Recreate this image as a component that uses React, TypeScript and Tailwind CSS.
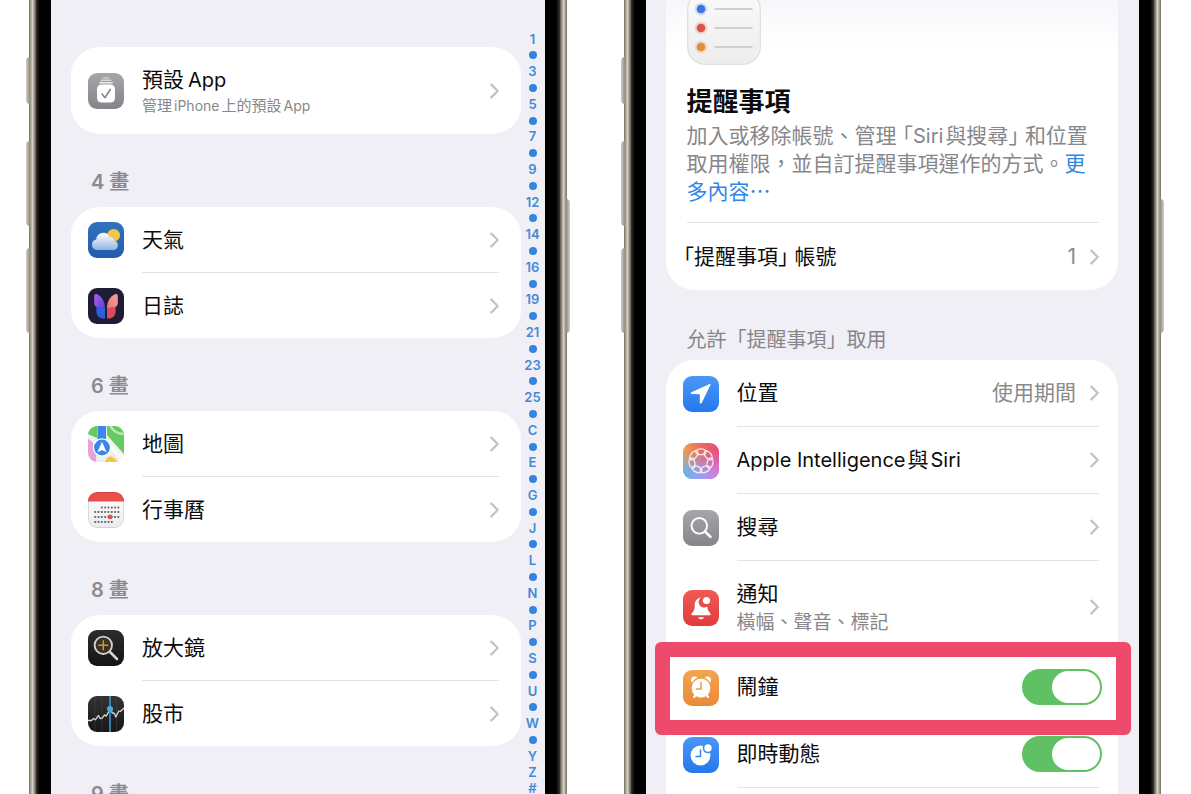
import type { ReactNode } from "react";

const INDEX =
  "1 • 3 • 5 • 7 • 9 • 12 • 14 • 16 • 19 • 21 • 23 • 25 • C • E • G • J • L • N • P • S • U • W • Y Z #".split(" ");

function Chevron() {
  return (
    <svg className="h-4 w-[9px] shrink-0" viewBox="0 0 9 16" fill="none" stroke="#c3c3c6" strokeWidth="2.2" strokeLinecap="round" strokeLinejoin="round" aria-hidden="true">
      <path d="M1.3 1.6 7.7 8l-6.4 6.4" />
    </svg>
  );
}

function Tile({ children }: { children: ReactNode }) {
  return (
    <svg className="size-9 shrink-0 rounded-[9px]" viewBox="0 0 36 36" fill="none" aria-hidden="true">
      {children}
    </svg>
  );
}

function Fill({ id, from, to }: { id: string; from: string; to: string }) {
  return (
    <>
      <defs>
        <linearGradient id={id} x1="0" y1="0" x2="0" y2="1">
          <stop stopColor={from} />
          <stop offset="1" stopColor={to} />
        </linearGradient>
      </defs>
      <rect width="36" height="36" fill={`url(#${id})`} />
    </>
  );
}

const DefaultAppsIcon = () => (
  <Tile>
    <Fill id="defaults" from="#a5a5aa" to="#858589" />
    <path d="M15 5h6" stroke="#c9c9cc" strokeWidth="1.3" strokeLinecap="round" />
    <path d="M13.3 7.3h9.4" stroke="#d8d8da" strokeWidth="1.5" strokeLinecap="round" />
    <path d="M11.8 9.8h12.4" stroke="#ebebec" strokeWidth="1.6" strokeLinecap="round" />
    <rect x="9" y="11.5" width="18" height="18" rx="4.5" fill="#fff" />
    <path d="m14 21 3 3.7 5.2-8.2" stroke="#8c8c90" strokeWidth="1.7" strokeLinecap="round" strokeLinejoin="round" />
  </Tile>
);

const WeatherIcon = () => (
  <Tile>
    <Fill id="weather" from="#3273bd" to="#235bae" />
    <circle cx="25.6" cy="13.3" r="6.4" fill="#f3c54d" />
    <defs>
      <linearGradient id="cloud" x1="0" y1="0" x2="0" y2="1">
        <stop stopColor="#fff" />
        <stop offset="1" stopColor="#8fb4e2" />
      </linearGradient>
    </defs>
    <path d="M8.500 28a5.400 5.400 0 0 1-.3-10.600 7 7 0 0 1 13.300-2.600 5 5 0 0 1 4.800 4 4.700 4.700 0 0 1-.4 9.200z" fill="url(#cloud)" />
  </Tile>
);

const JournalIcon = () => (
  <Tile>
    <rect width="36" height="36" fill="#1f1c36" />
    <defs>
      <linearGradient id="wingL" x1="0" y1="0" x2="1" y2="1">
        <stop stopColor="#b45fe8" />
        <stop offset="1" stopColor="#5440dc" />
      </linearGradient>
      <linearGradient id="wingR" x1="1" y1="0" x2="0" y2="1">
        <stop stopColor="#f3a48f" />
        <stop offset="1" stopColor="#ef6f86" />
      </linearGradient>
    </defs>
    <path d="M8.800 18h6.500l1.700 3v9l-1 .8c-3.700-.6-6.600-2-7.400-5.600-.5-2.700-.4-5.200.2-7.200z" fill="#2f5edb" />
    <path d="M27.200 18h-6.500L19 21v9l1 .8c3.700-.6 6.600-2 7.400-5.600.5-2.700.4-5.200-.2-7.200z" fill="#d94a5c" />
    <path d="M6.200 8.200c0-1.800 1.200-2.700 2.800-2 4.800 2.200 8 6.800 8 14.800-1.500-1.600-4-1.700-6.500-1.700-2.600 0-4-1.200-4.300-3.500z" fill="url(#wingL)" />
    <path d="M29.800 8.200c0-1.800-1.200-2.700-2.800-2-4.800 2.200-8 6.800-8 14.800 1.500-1.600 4-1.700 6.500-1.700 2.600 0 4-1.200 4.300-3.500z" fill="url(#wingR)" />
  </Tile>
);

const MapsIcon = () => (
  <Tile>
    <rect width="36" height="36" fill="#eef0ee" />
    <path d="M0 0h9v12L0 8z" fill="#66ca62" />
    <path d="M19 0h17v28L19 9z" fill="#66ca62" />
    <path d="M22 -1c3 7 9 9 15 9" stroke="#b8e7b0" strokeWidth="2.5" />
    <path d="M0 13c7 3 9 10 8 23H0z" fill="#e5a3da" />
    <path d="M17 36c1-4 4-6 7-5.500l7 5.500z" fill="#f7c83f" />
    <path d="M20 18 36 34" stroke="#fafafa" strokeWidth="4" />
    <rect x="9.5" width="8.5" height="16" fill="#3c86ea" />
    <circle cx="14" cy="21.5" r="9.3" fill="#fff" />
    <circle cx="14" cy="21.5" r="7.9" fill="#3a86e8" />
    <path d="m14 15.700 4.600 10.600L14 24l-4.600 2.300z" fill="#fff" />
  </Tile>
);

const CALENDAR_DOTS = [
  [15.5, [3, 4, 5, 6, 7, 8]],
  [20, [1, 2, 3, 4, 5, 6, 7, 8]],
  [25, [1, 2, 3, 4, 5, 6, 7, 8]],
  [30, [1, 2, 3, 4, 5, 6]],
] as const;

const CalendarIcon = () => (
  <Tile>
    <Fill id="calendar" from="#fdfdfd" to="#ececee" />
    <rect width="36" height="9.5" fill="#ea4e49" />
    {CALENDAR_DOTS.map(([y, columns]) =>
      columns.map((n) => <rect key={`${y}-${n}`} x={3 + n * 3.3} y={y - 1} width="1.9" height="1.9" rx=".4" fill="#6d6d70" />),
    )}
    <rect x="20" y="22.8" width="4.3" height="4.3" rx="1" fill="#e2514c" />
    <rect x=".5" y=".5" width="35" height="35" rx="8.5" stroke="#000" strokeOpacity=".1" />
  </Tile>
);

const MagnifierIcon = () => (
  <Tile>
    <Fill id="magnifier" from="#2d2c2b" to="#141414" />
    <path d="m21.500 21.500 7.500 7.500" stroke="#d4d4d4" strokeWidth="2.6" strokeLinecap="round" />
    <circle cx="15.3" cy="15.3" r="8.7" fill="#3a3222" stroke="#cfcfd0" strokeWidth="1.9" />
    <path d="M15.300 10.800v9M10.800 15.300h9" stroke="#cf9a30" strokeWidth="1.5" strokeLinecap="round" />
  </Tile>
);

const StocksIcon = () => (
  <Tile>
    <Fill id="stocks" from="#343434" to="#161616" />
    <path d="M7 0v36M14 0v36M28.500 0v36" stroke="#444" strokeWidth=".5" />
    <path d="M22 0v36" stroke="#3f9fd8" strokeWidth="1.5" />
    <path d="M0 24.500h3.500l2-2 2 1.200 3-4.200 1.800 3.200 2.200-.8 2-3 1.700 1.200L22 13.500l2.500 3.500 2 .5 1.300 3.500 3-6 1.500.5L36 12" stroke="#d6d6d6" strokeWidth="1.3" strokeLinejoin="round" />
    <circle cx="22" cy="13" r="3.1" fill="#46a9e2" />
  </Tile>
);

const LocationIcon = () => (
  <Tile>
    <Fill id="location" from="#4c97f8" to="#2578ef" />
    <path d="M26.600 8 8.300 16.300c-1 .5-.7 1.800.3 1.800l8.200.1v8.300c0 1.100 1.400 1.400 1.900.4L27.400 9c.3-.8-.1-1.300-.8-1z" fill="#fff" />
  </Tile>
);

const IntelligenceIcon = () => (
  <Tile>
    <defs>
      <linearGradient id="aiTop" x1="0" y1="0" x2="1" y2="0">
        <stop stopColor="#f0a24f" />
        <stop offset=".55" stopColor="#ea6560" />
        <stop offset="1" stopColor="#e94a7c" />
      </linearGradient>
      <linearGradient id="aiBottom" x1="0" y1="0" x2="1" y2="0">
        <stop stopColor="#5fb6f3" />
        <stop offset=".5" stopColor="#9aa0f0" />
        <stop offset="1" stopColor="#d978e4" />
      </linearGradient>
      <linearGradient id="aiFade" x1="0" y1="0" x2="0" y2="1">
        <stop offset=".2" stopColor="#000" />
        <stop offset=".85" stopColor="#fff" />
      </linearGradient>
      <mask id="aiMask">
        <rect width="36" height="36" fill="url(#aiFade)" />
      </mask>
    </defs>
    <rect width="36" height="36" fill="url(#aiTop)" />
    <rect width="36" height="36" fill="url(#aiBottom)" mask="url(#aiMask)" />
    <g stroke="#fff" strokeOpacity=".85" strokeWidth="1.3">
      {[0, 1, 2, 3, 4, 5, 6].map((n) => (
        <ellipse key={n} cx="18" cy="8.8" rx="5.3" ry="2.9" transform={`rotate(${(n * 360) / 7} 18 18)`} />
      ))}
    </g>
  </Tile>
);

const SearchIcon = () => (
  <Tile>
    <Fill id="search" from="#a5a5aa" to="#86868a" />
    <circle cx="16.3" cy="15.8" r="7.8" stroke="#fff" strokeWidth="1.9" />
    <path d="m22 21.500 5.500 5.300" stroke="#fff" strokeWidth="2.5" strokeLinecap="round" />
  </Tile>
);

const NotificationIcon = () => (
  <Tile>
    <Fill id="notification" from="#ef5a55" to="#e13c3e" />
    <path d="M18 7.500c-4.300.6-6.300 3.800-6.300 7.900 0 4.600-.9 5.700-2.700 7.500-1.200 1.200-.7 2.400.9 2.400h16.200c1.600 0 2.100-1.200.9-2.400-1.600-1.700-2.500-2.700-2.700-6.300A4.700 4.700 0 0 1 18 7.500z" fill="#fff" />
    <path d="M15 27.200h6c-.4 1.300-1.500 2-3 2s-2.600-.7-3-2z" fill="#fff" />
    <circle cx="23.5" cy="10.5" r="3.6" fill="#fff" />
  </Tile>
);

const AlarmIcon = () => (
  <Tile>
    <Fill id="alarm" from="#f2a452" to="#ea8a36" />
    <circle cx="11.5" cy="10" r="3.5" fill="#fff" />
    <circle cx="24.5" cy="10" r="3.5" fill="#fff" />
    <circle cx="18" cy="18" r="10.7" fill="#ee9642" />
    <circle cx="18" cy="18" r="9.4" fill="#fff" />
    <path d="M18 12.500V19h-4.500" stroke="#ee9642" strokeWidth="1.5" strokeLinecap="round" strokeLinejoin="round" />
    <path d="m11 27 1.800-2.200m12.200 2.200-1.800-2.200" stroke="#fff" strokeWidth="2.2" strokeLinecap="round" />
  </Tile>
);

const LiveIcon = () => (
  <Tile>
    <Fill id="live" from="#4a97f7" to="#2478ee" />
    <circle cx="17.5" cy="18.5" r="10" fill="#fff" />
    <circle cx="25" cy="11" r="5.3" fill="#3c8df4" />
    <circle cx="25" cy="11" r="3.7" fill="#fff" />
    <path d="M17.500 13v6.500h-4.500" stroke="#3585f2" strokeWidth="1.5" strokeLinecap="round" strokeLinejoin="round" />
  </Tile>
);

function RemindersIcon() {
  return (
    <svg className="h-[74px] w-[74px]" viewBox="0 0 74 74" fill="none" aria-hidden="true">
      <defs>
        <linearGradient id="reminders" x1="0" y1="0" x2="0" y2="1">
          <stop stopColor="#fafafa" />
          <stop offset="1" stopColor="#ededee" />
        </linearGradient>
      </defs>
      <rect x=".7" y=".7" width="72.6" height="72.6" rx="17" fill="url(#reminders)" stroke="#dededf" strokeWidth="1.2" />
      {[
        [18, "#3d73de"],
        [37, "#d9544c"],
        [56, "#e08c3a"],
      ].map(([y, color]) => (
        <g key={y}>
          <circle cx="14" cy={y} r="6.3" fill={String(color)} opacity=".2" />
          <circle cx="14" cy={y} r="4.3" fill={String(color)} />
          <path d={`M28 ${y}h37`} stroke="#c4c4c6" strokeWidth="1.3" strokeLinecap="round" />
        </g>
      ))}
    </svg>
  );
}

function Phone({ gutters, children }: { gutters: string; children: ReactNode }) {
  const rail = "w-[7px] shrink-0";
  const leftKey = "absolute -left-[3px] w-1 rounded-l-sm bg-linear-to-r from-[#d5d0c6] to-[#8f897d]";
  return (
    <div className={`flex min-w-0 ${gutters}`}>
      <div className="relative flex min-w-0 flex-1">
        <i className={`${leftKey} top-[57px] h-[47px]`} />
        <i className={`${leftKey} top-[141px] h-[85px]`} />
        <i className={`${leftKey} top-[248px] h-[85px]`} />
        <i className="absolute top-[199px] -right-[3px] h-[134px] w-1 rounded-r-sm bg-linear-to-l from-[#d5d0c6] to-[#8f897d]" />
        <div className={`${rail} bg-linear-to-r from-[#77715f] via-[#d8d2c6] to-[#5c574e]`} />
        <div className="w-[15px] shrink-0 bg-linear-to-r from-[#3a3834] via-black via-35% to-black" />
        <div className="min-w-0 flex-1 bg-[#f0eff5]">{children}</div>
        <div className="w-[15px] shrink-0 bg-linear-to-l from-[#3a3834] via-black via-35% to-black" />
        <div className={`${rail} bg-linear-to-l from-[#77715f] via-[#d8d2c6] to-[#5c574e]`} />
      </div>
    </div>
  );
}

function AppRow({ icon, label }: { icon: ReactNode; label: string }) {
  return (
    <li className="group flex items-center gap-[18px] pr-[22px] pl-[17px]">
      {icon}
      <a href="#app" className="flex h-[66px] flex-1 items-center justify-between border-b border-[#e3e3e6] group-last:h-[65px] group-last:border-0">
        {label}
        <Chevron />
      </a>
    </li>
  );
}

const GROUPS = [
  { title: "4 畫", apps: [{ icon: <WeatherIcon />, label: "天氣" }, { icon: <JournalIcon />, label: "日誌" }] },
  { title: "6 畫", apps: [{ icon: <MapsIcon />, label: "地圖" }, { icon: <CalendarIcon />, label: "行事曆" }] },
  { title: "8 畫", apps: [{ icon: <MagnifierIcon />, label: "放大鏡" }, { icon: <StocksIcon />, label: "股市" }] },
  { title: "9 畫", apps: [] },
];

function AppList() {
  return (
    <div className="flex pl-5">
      <div className="min-w-0 flex-1">
        <div className="h-[47px] bg-radial-[at_30px_-8px] from-[#e2e1e7] to-[#f0eff5] to-8%" />
        <a href="#defaults" className="flex h-[87px] items-center gap-[18px] rounded-[28px] bg-white pr-[22px] pl-[17px]">
          <DefaultAppsIcon />
          <span className="flex-1 pt-[2px]">
            <span className="block leading-7">
              預設<span className="ml-1 text-[20px]">App</span>
            </span>
            <span className="block text-[15px] leading-6 text-[#87878b]">
              管理<span className="mx-[2px] text-[14px]">iPhone</span>上的預設<span className="ml-[2px] text-[14px]">App</span>
            </span>
          </span>
          <Chevron />
        </a>
        {GROUPS.map((group) => (
          <section key={group.title}>
            <h2 className="flex h-[73px] items-end pb-[11px] pl-5 text-[20px] leading-7 font-semibold text-[#8b8b90]">{group.title}</h2>
            <ul className="rounded-[28px] bg-white">
              {group.apps.map((app) => (
                <AppRow key={app.label} {...app} />
              ))}
            </ul>
          </section>
        ))}
      </div>
      <nav aria-label="索引" className="mt-[31px] grid h-[766px] w-6 shrink-0 auto-rows-fr text-[13px] leading-none font-semibold text-[#4489d6]">
        {INDEX.map((entry, n) => (
          <a key={n} href="#index" className="flex min-h-0 items-center justify-center">
            {entry === "•" ? <i className="size-2 rounded-full bg-[#3583e3]" /> : entry}
          </a>
        ))}
      </nav>
    </div>
  );
}

const Open = () => <span className="pl-[6px] [font-feature-settings:'halt']">「</span>;
const Close = () => <span className="pr-[6px] [font-feature-settings:'halt']">」</span>;

function SettingRow({ icon, children, value }: { icon: ReactNode; children: ReactNode; value?: string }) {
  return (
    <li className="flex items-center gap-[18px] pr-[19px] pl-[17px]">
      {icon}
      <a href="#setting" className="flex min-h-[67px] flex-1 items-center border-b border-[#e3e3e6]">
        <span className="flex-1">{children}</span>
        {value && <span className="pr-[14px] text-[#8a8a8e]">{value}</span>}
        <Chevron />
      </a>
    </li>
  );
}

function ToggleRow({ icon, id, label, marked }: { icon: ReactNode; id: string; label: string; marked?: boolean }) {
  return (
    <li className="relative flex items-center gap-[18px] pr-[19px] pl-[17px]">
      {icon}
      <div className="flex min-h-[67px] flex-1 items-center border-b border-[#e3e3e6]">
        <label htmlFor={id} className="flex-1">
          {label}
        </label>
        <input
          id={id}
          type="checkbox"
          role="switch"
          defaultChecked
          className="-mr-[3px] h-9 w-20 shrink-0 appearance-none rounded-full bg-[#d8d8dc] p-[2px] before:block before:h-8 before:w-12 before:rounded-full before:bg-white checked:bg-[#5fc163] checked:before:ml-7"
        />
      </div>
      {marked && <div className="pointer-events-none absolute -top-3 -right-[13px] -bottom-[14px] -left-[11px] z-10 rounded-md border-[15px] border-[#ee4a6b]" />}
    </li>
  );
}

function RemindersSettings() {
  return (
    <div className="pr-[21px] pl-5">
      <section className="rounded-b-[28px] bg-linear-to-b from-[#f6f6fa] to-white to-[60px]">
        <div className="-mt-[9px] px-[21px]">
          <RemindersIcon />
          <h1 className="pt-[19px] text-[26px] leading-9 font-bold">提醒事項</h1>
          <p className="pt-[2px] leading-7 text-[#87878b]">
            加入或移除帳號、管理
            <Open />
            <span className="mr-[2px] text-[20px]">Siri</span>與搜尋
            <Close />
            和位置取用權限，並自訂提醒事項運作的方式。
            <a href="#more" className="text-[#2f86e8]">更多內容⋯</a>
          </p>
        </div>
        <a href="#accounts" className="mt-4 mr-[19px] ml-[21px] flex h-[68px] items-center border-t border-[#e3e3e6]">
          <span className="-ml-[9px] flex-1">
            <Open />
            提醒事項
            <Close />
            帳號
          </span>
          <span className="pr-[14px] text-[#8a8a8e]">1</span>
          <Chevron />
        </a>
      </section>
      <h2 className="flex h-[70px] items-end pb-[6px] pl-[21px] text-[20px] leading-7 text-[#85858a]">允許「提醒事項」取用</h2>
      <ul className="rounded-t-[28px] bg-white pb-10">
        <SettingRow icon={<LocationIcon />} value="使用期間">位置</SettingRow>
        <SettingRow icon={<IntelligenceIcon />}>
          <span className="mr-[2px] text-[20px]">Apple Intelligence</span>與<span className="ml-[2px] text-[20px]">Siri</span>
        </SettingRow>
        <SettingRow icon={<SearchIcon />}>搜尋</SettingRow>
        <SettingRow icon={<NotificationIcon />}>
          <span className="block pt-[18px] leading-[30px]">通知</span>
          <span className="block pb-4 text-[19px] leading-7 text-[#87878b]">橫幅、聲音、標記</span>
        </SettingRow>
        <ToggleRow icon={<AlarmIcon />} id="alarm-access" label="鬧鐘" marked />
        <ToggleRow icon={<LiveIcon />} id="live-access" label="即時動態" />
      </ul>
    </div>
  );
}

export default function App() {
  return (
    <main lang="zh-Hant" className="grid h-screen grid-cols-2 overflow-hidden bg-white font-['Inter','Noto_Sans_CJK_TC',sans-serif] text-[21px] leading-7 text-[#0c0c0d]">
      <Phone gutters="px-[29px]">
        <AppList />
      </Phone>
      <Phone gutters="pr-[30px] pl-7">
        <RemindersSettings />
      </Phone>
    </main>
  );
}
